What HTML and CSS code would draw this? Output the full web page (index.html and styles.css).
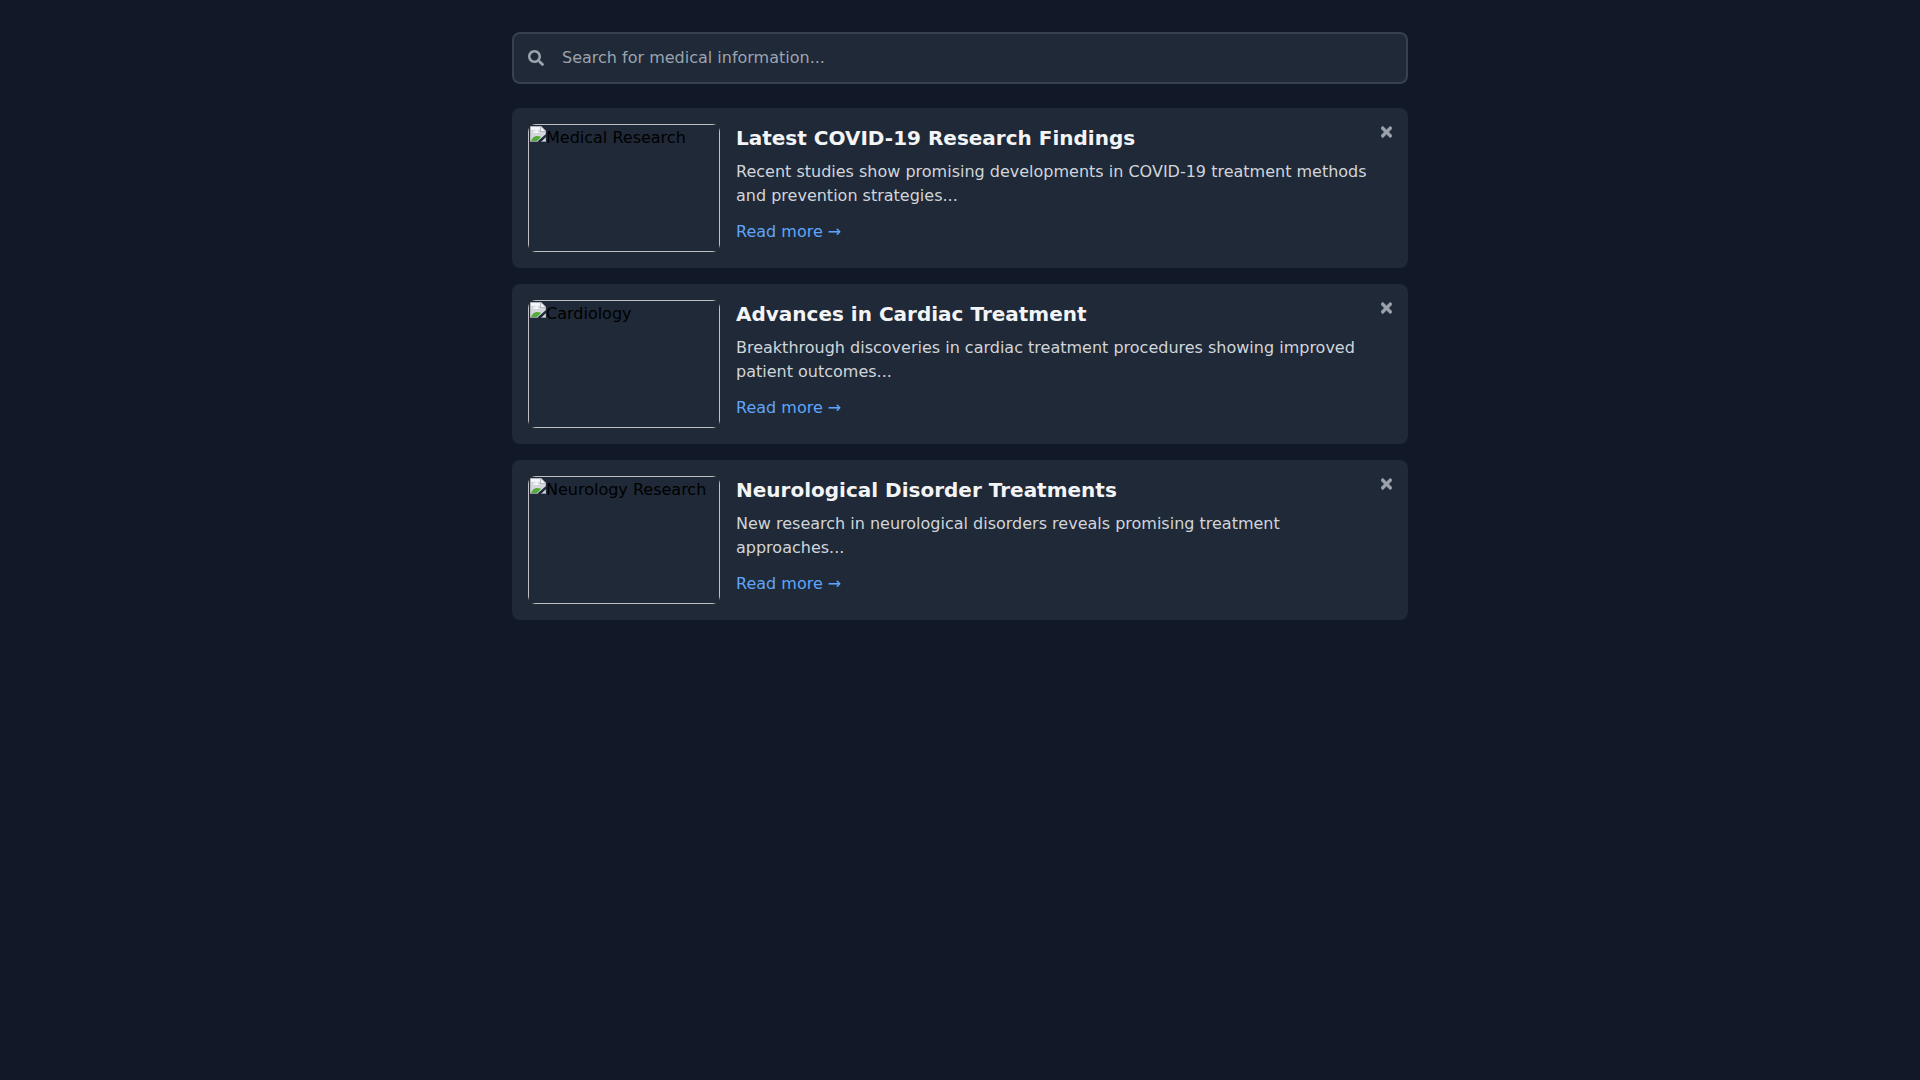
FILE: index.html
```html
<!DOCTYPE html>
<html lang="en">
<head>
    <meta charset="UTF-8">
    <meta name="viewport" content="width=device-width, initial-scale=1.0">
    <title>Medical Search</title>
    <link rel="stylesheet" href="styles.css">
</head>
<body>
    <!-- Shared icons -->
    <svg class="icon-defs" aria-hidden="true">
        <symbol id="icon-search" viewBox="0 0 512 512">
            <path d="M505 442.7L405.3 343c-4.5-4.5-10.6-7-17-7H372c27.6-35.3 44-79.7 44-128C416 93.1 322.9 0 208 0S0 93.1 0 208s93.1 208 208 208c48.3 0 92.7-16.4 128-44v16.3c0 6.4 2.5 12.5 7 17l99.7 99.7c9.4 9.4 24.6 9.4 33.9 0l28.3-28.3c9.4-9.4 9.4-24.6.1-34zM208 336c-70.7 0-128-57.2-128-128 0-70.7 57.2-128 128-128 70.7 0 128 57.2 128 128 0 70.7-57.2 128-128 128z"/>
        </symbol>
        <symbol id="icon-close" viewBox="0 0 352 512">
            <path stroke-width="20" d="M242.72 256l100.07-100.07c12.28-12.28 12.28-32.19 0-44.48l-22.24-22.24c-12.28-12.28-32.19-12.28-44.48 0L176 189.28 75.93 89.21c-12.28-12.28-32.19-12.28-44.48 0L9.21 111.45c-12.28 12.28-12.28 32.19 0 44.48L109.28 256 9.21 356.07c-12.28 12.28-12.28 32.19 0 44.48l22.24 22.24c12.28 12.28 32.2 12.28 44.48 0L176 322.72l100.07 100.07c12.28 12.28 32.2 12.28 44.48 0l22.24-22.24c12.28-12.28 12.28-32.19 0-44.48L242.72 256z"/>
        </symbol>
        <symbol id="icon-picture" viewBox="0 0 16 16">
            <path fill="#b4b8c0" d="M0 0h11l5 5v11H0z"/>
            <path fill="#d3d7e0" d="M1 1h10v4h4v10H1z"/>
            <path fill="#f4f5f8" d="M1 1h9v3H1zM3 7q0-2 2-2 1-1 2-1 2 1 2 3z"/>
            <path fill="#56ab3b" d="M1 15q2-5 6-5 3 0 4 1l-4 4z"/>
            <path fill="#b4b8c0" d="M10 0h1l5 5v1h-6z"/>
            <path fill="#f6f7fa" d="M11 1l4 4h-4z"/>
            <path fill="#1f2937" d="M16 8v3l-5 5H8v-1z"/>
            <path fill="#8e949e" d="M0 15h8v1H0zM12 15h4v1h-4z"/>
        </symbol>
    </svg>

    <main class="container">
        <div class="search-bar">
            <label class="search-label" for="searchInput" aria-label="Search">
                <svg class="search-icon"><use href="#icon-search"/></svg>
            </label>
            <input type="text" class="search-input" id="searchInput"
                   placeholder="Search for medical information...">
        </div>

        <div class="results">
            <article class="card">
                <div class="card-image">
                    <div class="image-frame">
                        <svg class="picture-icon" aria-hidden="true"><use href="#icon-picture"/></svg>
                        <span>Medical Research</span>
                    </div>
                </div>
                <div class="card-body">
                    <h2 class="card-title">Latest COVID-19 Research Findings</h2>
                    <p class="card-text">Recent studies show promising developments in COVID-19 treatment methods and prevention strategies...</p>
                    <a class="read-more" href="#">Read more →</a>
                </div>
                <button class="close-btn" type="button" aria-label="Close">
                    <svg class="close-icon"><use href="#icon-close"/></svg>
                </button>
            </article>

            <article class="card">
                <div class="card-image">
                    <div class="image-frame">
                        <svg class="picture-icon" aria-hidden="true"><use href="#icon-picture"/></svg>
                        <span>Cardiology</span>
                    </div>
                </div>
                <div class="card-body">
                    <h2 class="card-title">Advances in Cardiac Treatment</h2>
                    <p class="card-text">Breakthrough discoveries in cardiac treatment procedures showing improved patient outcomes...</p>
                    <a class="read-more" href="#">Read more →</a>
                </div>
                <button class="close-btn" type="button" aria-label="Close">
                    <svg class="close-icon"><use href="#icon-close"/></svg>
                </button>
            </article>

            <article class="card">
                <div class="card-image">
                    <div class="image-frame">
                        <svg class="picture-icon" aria-hidden="true"><use href="#icon-picture"/></svg>
                        <span>Neurology Research</span>
                    </div>
                </div>
                <div class="card-body">
                    <h2 class="card-title">Neurological Disorder Treatments</h2>
                    <p class="card-text">New research in neurological disorders reveals promising treatment approaches...</p>
                    <a class="read-more" href="#">Read more →</a>
                </div>
                <button class="close-btn" type="button" aria-label="Close">
                    <svg class="close-icon"><use href="#icon-close"/></svg>
                </button>
            </article>
        </div>
    </main>

    <script>
        document.querySelectorAll('.close-btn').forEach(btn => {
            btn.addEventListener('click', () => btn.closest('.card').remove());
        });
    </script>
</body>
</html>
```
FILE: styles.css
```css
* {
    box-sizing: border-box;
}
body {
    margin: 0;
    background: #111827;
    color: #000;
    font-family: "DejaVu Sans", sans-serif;
    font-size: 16px;
    line-height: 24px;
}
.icon-defs {
    display: none;
}
.container {
    max-width: 928px;
    margin: 0 auto;
    padding: 32px 16px;
}
.search-bar {
    display: flex;
    align-items: center;
    margin-bottom: 24px;
    background: #1f2937;
    border: 2px solid #374151;
    border-radius: 8px;
}
.search-bar:focus-within {
    border-color: #3b82f6;
}
.search-label {
    display: flex;
    padding-left: 14px;
}
.search-icon {
    width: 16px;
    height: 16px;
    fill: #9ca3af;
}
.search-input {
    flex: 1;
    min-width: 0;
    height: 48px;
    padding: 11px 18px 13px;
    background: transparent;
    border: none;
    outline: none;
    color: #f3f4f6;
    font: inherit;
}
.search-input::placeholder {
    color: #9ca3af;
}
.results {
    display: flex;
    flex-direction: column;
    gap: 16px;
}
.card {
    position: relative;
    display: flex;
    gap: 16px;
    padding: 16px;
    background: #1f2937;
    border-radius: 8px;
}
.card-image {
    flex-shrink: 0;
    width: 192px;
    height: 128px;
    border-radius: 8px;
    overflow: hidden;
}
.image-frame {
    display: flex;
    align-items: flex-start;
    height: 100%;
    padding: 1px;
    border: 1px solid #c0c0c0;
}
.picture-icon {
    flex-shrink: 0;
    width: 16px;
    height: 16px;
}
.card-body {
    flex: 1;
    min-width: 0;
}
.card-title {
    margin: 0 0 8px;
    color: #f3f4f6;
    font-size: 20px;
    font-weight: bold;
    line-height: 28px;
}
.card-text {
    margin: 0 0 12px;
    color: #d1d5db;
}
.read-more {
    color: #60a5fa;
    text-decoration: none;
}
.read-more:hover {
    text-decoration: underline;
}
.close-btn {
    position: absolute;
    top: 16px;
    right: 16px;
    display: flex;
    padding: 0;
    background: none;
    border: none;
    cursor: pointer;
}
.close-icon {
    width: 11px;
    height: 16px;
    fill: #9ca3af;
    stroke: #9ca3af;
    overflow: visible;
}
.close-btn:hover .close-icon {
    fill: #f3f4f6;
    stroke: #f3f4f6;
}
```
